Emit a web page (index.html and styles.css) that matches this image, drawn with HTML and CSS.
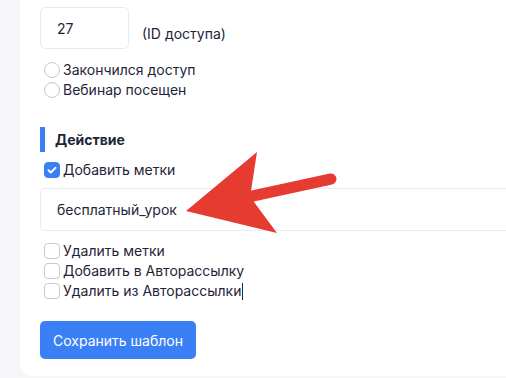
FILE: index.html
```html
<!DOCTYPE html>
<html lang="ru">
<head>
    <meta charset="UTF-8">
    <meta name="viewport" content="width=device-width, initial-scale=1.0">
    <title>Шаблон</title>
    <link rel="stylesheet" href="styles.css">
</head>
<body>
    <div class="card">
        <div class="id-row">
            <input class="field field-small" type="text" value="27">
            <span class="hint">(ID доступа)</span>
        </div>

        <div class="options">
            <label class="option"><span class="radio"></span>Закончился доступ</label>
            <label class="option"><span class="radio"></span>Вебинар посещен</label>
        </div>

        <h3 class="section-title">Действие</h3>

        <label class="option checked-row">
            <span class="box box-checked">
                <svg width="16" height="16" viewBox="0 0 16 16"><path d="M4.5 8.3l2.3 2.2 4.7-4.6" fill="none" stroke="#fff" stroke-width="2" stroke-linecap="round" stroke-linejoin="round"/></svg>
            </span>Добавить метки
        </label>

        <div class="wide-wrap">
            <input class="field field-wide" type="text" value="бесплатный_урок">
        </div>

        <div class="options options-actions">
            <label class="option"><span class="box"></span>Удалить метки</label>
            <label class="option"><span class="box"></span>Добавить в Авторассылку</label>
            <label class="option"><span class="box"></span>Удалить из Авторассылки<span class="caret"></span></label>
        </div>

        <button class="btn">Сохранить шаблон</button>
    </div>

    <svg class="arrow" width="506" height="378" viewBox="0 0 506 378">
        <line x1="248" y1="197" x2="331" y2="179" stroke="#e53b31" stroke-width="11" stroke-linecap="round"/>
        <polygon points="186,211 257,152 251,191 254,202 277,233" fill="#e53b31"/>
    </svg>
</body>
</html>
```

FILE: styles.css
```css
body {
    margin: 0;
    padding: 0;
    background: #f6f6f8;
    font-family: Inter, 'Noto Sans', sans-serif;
    font-size: 14px;
    color: #1e2538;
    overflow: hidden;
    position: relative;
    height: 378px;
}

.card {
    background: #fff;
    margin-left: 20px;
    padding: 7px 0 17px 20px;
    border-radius: 0 0 0 12px;
    overflow: hidden;
}

.id-row {
    display: flex;
    align-items: flex-end;
    gap: 13px;
}

.field {
    box-sizing: border-box;
    border: 1px solid #e9ebf3;
    border-radius: 5px;
    font-family: inherit;
    font-size: 14px;
    color: #1e2538;
    padding: 0 16px;
    outline: none;
    background: #fff;
}

.field-small {
    width: 89px;
    height: 42px;
    margin: 0;
}

.hint {
    line-height: 20px;
    margin-bottom: 5px;
}

.options {
    margin-top: 11px;
}

.option {
    display: flex;
    align-items: center;
    height: 20px;
    line-height: 20px;
}

.radio,
.box {
    box-sizing: border-box;
    width: 16px;
    height: 16px;
    margin: 0 3px 0 4px;
    border: 1px solid #c8c9cd;
    background: #fff;
    flex-shrink: 0;
}

.radio {
    border-radius: 50%;
}

.box {
    border-radius: 4px;
}

.box-checked {
    background: #3b7ff7;
    border-color: #3b7ff7;
    display: flex;
}

.box-checked svg {
    margin: -1px;
}

.section-title {
    margin: 27px 0 0 0;
    height: 25px;
    line-height: 25px;
    border-left: 5px solid #3b7ff7;
    padding-left: 10px;
    font-size: 14px;
    font-weight: 700;
}

.checked-row {
    margin-top: 8px;
}

.wide-wrap {
    margin-top: 8px;
}

.field-wide {
    display: block;
    width: calc(100% + 20px);
    height: 43px;
    margin: 0;
}

.options-actions {
    margin-top: 10px;
}

.caret {
    display: inline-block;
    width: 1px;
    height: 17px;
    background: #1e2538;
    margin-left: 1px;
}

.btn {
    margin-top: 20px;
    height: 38px;
    padding: 0 13px;
    border: none;
    border-radius: 5px;
    background: #3b7ff7;
    color: #fff;
    font-family: inherit;
    font-size: 14px;
    font-weight: 400;
}

.arrow {
    position: absolute;
    top: 0;
    left: 0;
    pointer-events: none;
}
```
